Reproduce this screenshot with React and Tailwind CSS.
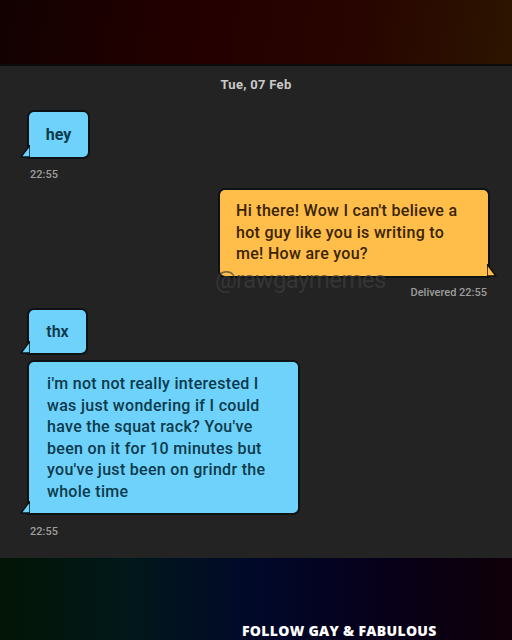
import React from "react";

const BLUE = "#6fd2fa";
const ORANGE = "#ffbe4a";

const Tail = ({ side, color }) => (
  <svg
    className={`absolute -bottom-[1px] ${side === "left" ? "-left-[9px]" : "-right-[9px]"}`}
    width="10"
    height="13"
    viewBox="0 0 10 13"
  >
    {side === "left" ? (
      <path d="M10 0 L10 12 L1 12 Z" fill={color} stroke="#0b1417" strokeWidth="1.5" strokeLinejoin="round" />
    ) : (
      <path d="M0 0 L0 12 L9 12 Z" fill={color} stroke="#140d02" strokeWidth="1.5" strokeLinejoin="round" />
    )}
  </svg>
);

const Bubble = ({ side = "left", color, textColor, className = "", children }) => (
  <div
    className={`relative ${
      side === "left" ? "rounded-[5px] rounded-bl-none" : "rounded-[5px] rounded-br-none"
    } shadow-[0_0_0_2px_#0d1315] ${className}`}
    style={{ background: color, color: textColor }}
  >
    {children}
    <Tail side={side} color={color} />
  </div>
);

const Time = ({ children, className = "" }) => (
  <div
    className={`text-[11px] leading-[12px] font-medium text-[#9c9c9c] ${className}`}
    style={{ fontFamily: "Roboto, 'Liberation Sans', sans-serif" }}
  >
    {children}
  </div>
);

export default function App() {
  return (
    <div
      className="w-[512px] h-[640px] flex flex-col bg-black overflow-hidden"
      style={{ fontFamily: "Roboto, 'Liberation Sans', sans-serif" }}
    >
      {/* top band */}
      <div className="h-[64px] shrink-0 bg-[linear-gradient(100deg,#120101_0%,#230000_35%,#280500_70%,#2c1500_100%)]" />

      {/* chat panel */}
      <div className="h-[494px] shrink-0 bg-[#232323] border-t-2 border-[#0c0c0c] relative flex flex-col">
        <div className="pt-[12px] text-center text-[13px] leading-[14px] font-bold text-[#c9c9c9] tracking-[0.3px]">
          Tue, 07 Feb
        </div>

        {/* hey */}
        <div className="pl-[29px] mt-[20px]">
          <Bubble color={BLUE} textColor="#0c3a4c" className="w-[59px] h-[45px] flex items-center justify-center">
            <span className="text-[16px] font-bold">hey</span>
          </Bubble>
          <Time className="mt-[12px] pl-[1px]">22:55</Time>
        </div>

        {/* orange */}
        <div className="flex flex-col items-end pr-[24px] mt-[9px]">
          <Bubble
            side="right"
            color={ORANGE}
            textColor="#3a2400"
            className="w-[268px] h-[86px] pl-[16px] pt-[10px] text-[16px] leading-[21.6px] font-medium tracking-[0.3px]"
          >
            Hi there! Wow I can't believe a
            <br />
            hot guy like you is writing to
            <br />
            me! How are you?
          </Bubble>
          <Time className="mt-[11px] pr-[1px]">Delivered 22:55</Time>
        </div>

        {/* watermark */}
        <div className="absolute left-[215px] top-[201px] text-[24px] leading-[26px] text-[#3d3d3d] opacity-70 font-normal tracking-tight">
          @rawgaymemes
        </div>

        {/* thx + long */}
        <div className="pl-[29px] mt-[11px]">
          <Bubble color={BLUE} textColor="#0c3a4c" className="w-[57px] h-[43px] flex items-center justify-center">
            <span className="text-[16px] font-semibold">thx</span>
          </Bubble>
          <Bubble
            color={BLUE}
            textColor="#0c3a4c"
            className="mt-[9px] w-[269px] h-[151px] pl-[18px] pt-[11px] text-[16px] leading-[21.6px] font-medium tracking-[0.3px]"
          >
            i'm not not really interested I
            <br />
            was just wondering if I could
            <br />
            have the squat rack? You've
            <br />
            been on it for 10 minutes but
            <br />
            you've just been on grindr the
            <br />
            whole time
          </Bubble>
          <Time className="mt-[13px] pl-[1px]">22:55</Time>
        </div>
      </div>

      {/* bottom band */}
      <div className="flex-1 flex items-end pl-[242px] pb-[1px] bg-[linear-gradient(90deg,#021505_0%,#02181a_25%,#01082a_50%,#07001a_75%,#0f0008_100%)]">
        <span
          className="text-[14px] leading-[17px] font-extrabold text-white tracking-[0.3px]"
          style={{ fontFamily: "'Open Sans', sans-serif" }}
        >
          FOLLOW GAY &amp; FABULOUS
        </span>
      </div>
    </div>
  );
}
